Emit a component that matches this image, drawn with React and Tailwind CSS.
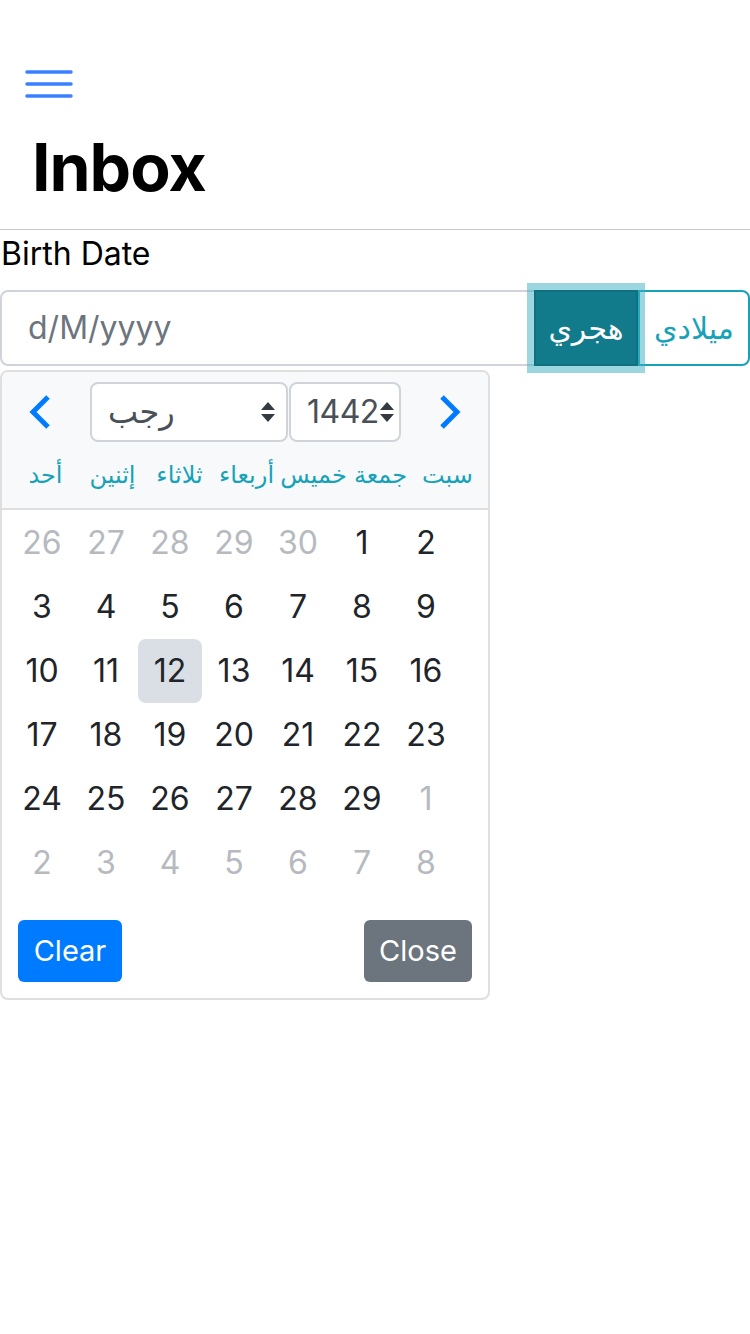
import React from "react";

const weekdays = ["أحد", "إثنين", "ثلاثاء", "أربعاء", "خميس", "جمعة", "سبت"];

// [day, muted]
const weeks = [
  [[26, 1], [27, 1], [28, 1], [29, 1], [30, 1], [1, 0], [2, 0]],
  [[3, 0], [4, 0], [5, 0], [6, 0], [7, 0], [8, 0], [9, 0]],
  [[10, 0], [11, 0], [12, 0], [13, 0], [14, 0], [15, 0], [16, 0]],
  [[17, 0], [18, 0], [19, 0], [20, 0], [21, 0], [22, 0], [23, 0]],
  [[24, 0], [25, 0], [26, 0], [27, 0], [28, 0], [29, 0], [1, 1]],
  [[2, 1], [3, 1], [4, 1], [5, 1], [6, 1], [7, 1], [8, 1]],
];

const SelectArrows = () => (
  <svg width="16" height="22" viewBox="0 0 16 22" className="shrink-0">
    <path d="M1 9 L8 1 L15 9 Z" fill="#343a40" />
    <path d="M1 13 L8 21 L15 13 Z" fill="#343a40" />
  </svg>
);

const Chevron = ({ dir }) => (
  <svg width="24" height="36" viewBox="0 0 24 36">
    <path
      d={dir === "left" ? "M20 3 L5 18 L20 33" : "M4 3 L19 18 L4 33"}
      fill="none"
      stroke="#007bff"
      strokeWidth="5"
    />
  </svg>
);

export default function App() {
  return (
    <div className="min-h-screen bg-white font-['Inter','DejaVu_Sans',sans-serif] text-[#212529]">
      {/* Header */}
      <div className="border-b border-[#c8c7cc] pb-[28px]">
        <div className="pt-[69px] pl-[25px]">
          <svg width="48" height="30" viewBox="0 0 48 30">
            <path d="M2 3 H46 M2 15 H46 M2 27 H46" stroke="#3880ff" strokeWidth="3.5" strokeLinecap="round" />
          </svg>
        </div>
        <h1 className="mt-[34px] pl-[32px] text-[66px] leading-[68px] font-bold text-black tracking-[-1px]">Inbox</h1>
      </div>

      {/* Form */}
      <div className="text-[32px] leading-[48px] text-black pl-[1px]">Birth Date</div>

      <div className="mt-[12px] flex h-[76px] w-[750px]">
        <div className="flex-1 flex items-center border-2 border-[#ced4da] rounded-l-[8px] pl-[26px] text-[32px] text-[#6c757d]">
          d/M/yyyy
        </div>
        <div className="w-[104px] -ml-[2px] flex items-center justify-center bg-[#117a8b] border-2 border-[#10707f] text-white text-[30px] shadow-[0_0_0_7px_rgba(58,176,195,0.5)] z-10">
          هجري
        </div>
        <div className="w-[112px] flex items-center justify-center border-2 border-[#17a2b8] rounded-r-[8px] text-[#17a2b8] text-[30px]">
          ميلادي
        </div>
      </div>

      {/* Datepicker */}
      <div className="mt-[4px] w-[490px] border-2 border-[#dfdfdf] rounded-[8px] overflow-hidden">
        <div className="bg-[#f8f9fa] border-b-2 border-[#dfdfdf]">
          <div className="flex items-center pt-[10px]">
            <div className="w-[88px] pl-[26px] flex items-center">
              <Chevron dir="left" />
            </div>
            <div className="w-[198px] h-[60px] bg-white border-2 border-[#ced4da] rounded-[8px] flex items-center justify-between pl-[16px] pr-[10px] text-[32px] text-[#495057]">
              <span>رجب</span>
              <SelectArrows />
            </div>
            <div className="ml-[1px] w-[112px] h-[60px] bg-white border-2 border-[#ced4da] rounded-[8px] flex items-center justify-between pl-[16px] pr-[9px] text-[32px] text-[#495057]">
              <span className="tracking-[-0.5px]">1442</span>
              <SelectArrows />
            </div>
            <div className="flex-1 pl-[37px] flex items-center">
              <Chevron dir="right" />
            </div>
          </div>
          <div className="grid grid-cols-7 w-[469px] ml-[10px] h-[66px] items-center">
            {weekdays.map((d) => (
              <div key={d} className="text-center text-[24px] text-[#17a2b8]">{d}</div>
            ))}
          </div>
        </div>

        <div className="pl-[8px] pt-[1px]">
          {weeks.map((w, i) => (
            <div key={i} className="flex">
              {w.map(([d, muted], j) => (
                <div
                  key={j}
                  className={
                    "w-[64px] h-[64px] flex items-center justify-center text-[32px] rounded-[8px] " +
                    (muted ? "text-[#b6babf] " : "text-[#212529] ") +
                    (i === 2 && j === 2 ? "bg-[#dadfe5]" : "")
                  }
                >
                  {d}
                </div>
              ))}
            </div>
          ))}
        </div>

        <div className="flex justify-between px-[16px] pt-[25px] pb-[16px]">
          <div className="w-[104px] h-[62px] rounded-[6px] bg-[#007bff] text-white text-[29px] flex items-center justify-center">Clear</div>
          <div className="w-[108px] h-[62px] rounded-[6px] bg-[#6c757d] text-white text-[29px] flex items-center justify-center">Close</div>
        </div>
      </div>
    </div>
  );
}
